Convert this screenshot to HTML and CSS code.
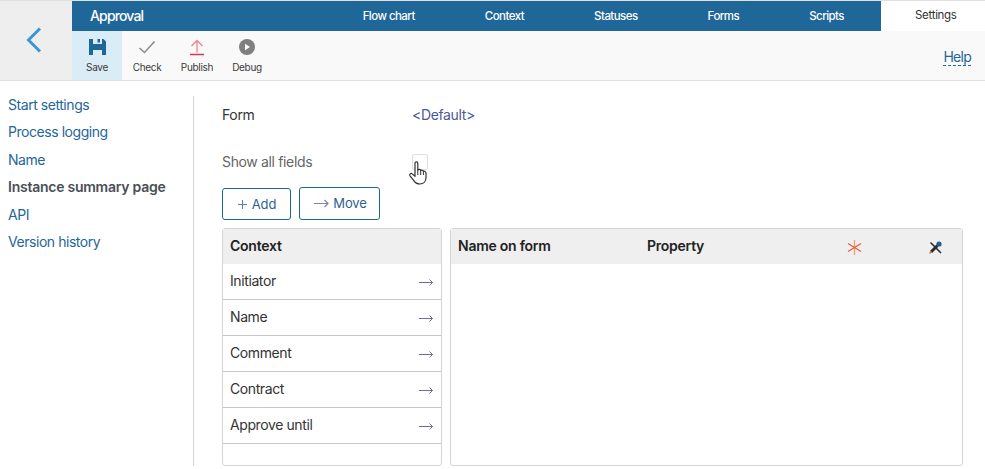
FILE: index.html
```html
<!DOCTYPE html>
<html lang="en">
<head>
<meta charset="utf-8">
<title>Approval</title>
<link rel="stylesheet" href="styles.css">
</head>
<body>
<header class="header">
  <a class="back"><svg width="18" height="28" viewBox="0 0 18 28"><path d="M15 2.500 3.500 14 15 25.500" fill="none" stroke="#3d96d4" stroke-width="3"/></svg></a>
  <div class="header-main">
    <div class="topbar">
      <div class="title">Approval</div>
      <nav class="tabs">
        <a class="tab">Flow chart</a>
        <a class="tab">Context</a>
        <a class="tab">Statuses</a>
        <a class="tab">Forms</a>
        <a class="tab">Scripts</a>
        <a class="tab tab-active">Settings</a>
      </nav>
    </div>
    <div class="toolbar">
      <a class="tool tool-active">
        <svg class="tool-icon" width="18" height="18" viewBox="0 0 18 18"><path fill="#1f6699" d="M1 1h4v5h9V1h1.500L18 3.500V17h-4v-5H5v5H1z"/><path fill="#1f6699" d="M9.500 1H12v3.500H9.500z"/></svg>
        <span>Save</span>
      </a>
      <a class="tool">
        <svg class="tool-icon" width="18" height="18" viewBox="0 0 18 18"><path d="M1.500 10 6.500 14.500 16.500 3.500" fill="none" stroke="#8a8a8a" stroke-width="1.500"/></svg>
        <span>Check</span>
      </a>
      <a class="tool">
        <svg class="tool-icon" width="18" height="18" viewBox="0 0 18 18"><path d="M9 14.500V2.500M3.500 8 9 2.500 14.500 8" fill="none" stroke="#f0828f" stroke-width="1.300"/><path d="M2 16.500h14" stroke="#e0334a" stroke-width="1.500"/></svg>
        <span>Publish</span>
      </a>
      <a class="tool">
        <svg class="tool-icon" width="18" height="18" viewBox="0 0 18 18"><circle cx="9" cy="9" r="8" fill="#808080"/><path d="M7 5.800v6.400L12 9z" fill="#fff"/></svg>
        <span>Debug</span>
      </a>
      <a class="help">Help</a>
    </div>
  </div>
</header>
<div class="page">
  <aside class="sidebar">
    <a class="side-link">Start settings</a>
    <a class="side-link">Process logging</a>
    <a class="side-link">Name</a>
    <a class="side-link side-current">Instance summary page</a>
    <a class="side-link">API</a>
    <a class="side-link">Version history</a>
  </aside>
  <main class="content">
    <div class="field field-form">
      <div class="field-label">Form</div>
      <a class="field-value">&lt;Default&gt;</a>
    </div>
    <div class="field field-show">
      <div class="field-label field-label-muted">Show all fields</div>
      <div class="check-wrap">
        <span class="checkbox"></span>
        <svg class="cursor" width="19" height="25" viewBox="0 0 19 25"><path d="M6 2.300c0-1.900 2.800-1.900 2.800 0V9c.9-.9 2.500-.7 2.900.5 1-.7 2.400-.3 2.700.9 1-.5 2.600 0 2.600 1.700v4.400c0 3.900-2.400 6.500-6 6.500-3.300 0-5-1.300-6.300-3.600L1 14.800c-.9-1.600.8-3 2.200-1.900L6 15.300z" fill="#fff" stroke="#333" stroke-width="1.200" stroke-linejoin="round"/><path d="M8.800 9v5M11.700 9.500V14M14.400 10.400V14" stroke="#333" stroke-width="1" fill="none"/></svg>
      </div>
    </div>
    <div class="actions">
      <button class="btn btn-add"><svg class="btn-icon" width="11" height="11" viewBox="0 0 11 11"><path d="M5.500 1v9M1 5.500h9" stroke="#5f7fa8" stroke-width="1.100" fill="none"/></svg>Add</button>
      <button class="btn btn-move"><svg class="btn-icon" width="15" height="9" viewBox="0 0 15 9"><path d="M0 4.500h14M10.500 1 14 4.500 10.500 8" fill="none" stroke="#7f86a8" stroke-width="1.200"/></svg>Move</button>
    </div>
    <div class="tables">
      <section class="panel panel-context">
        <div class="panel-head">Context</div>
        <div class="row"><span class="row-text">Initiator</span><svg class="row-arrow" width="14" height="9" viewBox="0 0 14 9"><path d="M0 4.500h13.500M10.500 1.500 13.500 4.500 10.500 7.500" fill="none" stroke="#7068a8" stroke-width="1"/></svg></div>
        <div class="row"><span class="row-text">Name</span><svg class="row-arrow" width="14" height="9" viewBox="0 0 14 9"><path d="M0 4.500h13.500M10.500 1.500 13.500 4.500 10.500 7.500" fill="none" stroke="#7068a8" stroke-width="1"/></svg></div>
        <div class="row"><span class="row-text">Comment</span><svg class="row-arrow" width="14" height="9" viewBox="0 0 14 9"><path d="M0 4.500h13.500M10.500 1.500 13.500 4.500 10.500 7.500" fill="none" stroke="#7068a8" stroke-width="1"/></svg></div>
        <div class="row"><span class="row-text">Contract</span><svg class="row-arrow" width="14" height="9" viewBox="0 0 14 9"><path d="M0 4.500h13.500M10.500 1.500 13.500 4.500 10.500 7.500" fill="none" stroke="#7068a8" stroke-width="1"/></svg></div>
        <div class="row"><span class="row-text">Approve until</span><svg class="row-arrow" width="14" height="9" viewBox="0 0 14 9"><path d="M0 4.500h13.500M10.500 1.500 13.500 4.500 10.500 7.500" fill="none" stroke="#7068a8" stroke-width="1"/></svg></div>
      </section>
      <section class="panel panel-form">
        <div class="panel-head panel-head-form">
          <span class="col-name">Name on form</span>
          <span class="col-prop">Property</span>
          <svg class="col-req" width="15" height="15" viewBox="0 0 15 15"><path d="M7.500 0v15" stroke="#f0a070" stroke-width="1.300" fill="none"/><path d="M1 3.500l13 8M14 3.500l-13 8" stroke="#f0553c" stroke-width="1.100" fill="none"/></svg>
          <svg class="col-pin" width="14" height="14" viewBox="0 0 14 14"><path d="M1.500 2.500 12 13" stroke="#2b2b2b" stroke-width="1.600"/><path d="M2 12 8.500 5.500" stroke="#2b2b2b" stroke-width="3"/><circle cx="10" cy="4" r="2.600" fill="#1f5f90"/><path d="M.5 13.500 2.500 11.500" stroke="#c9803a" stroke-width="1.500"/></svg>
        </div>
      </section>
    </div>
  </main>
</div>
</body>
</html>
```
FILE: styles.css
```css
* { box-sizing: border-box; }
html, body { margin: 0; padding: 0; }
body {
  width: 985px;
  height: 469px;
  overflow: hidden;
  background: #fff;
  font-family: Inter, "Liberation Sans", sans-serif;
  font-size: 14px;
  color: #333;
  border-top: 1px solid #e0e0e0;
}
.header { display: flex; height: 80px; border-bottom: 1px solid #e0e0e0; }
.back {
  width: 72px;
  background: #eeeeee;
  display: flex;
  align-items: flex-start;
  justify-content: center;
  padding-top: 25px;
  padding-right: 4px;
}
.header-main { flex: 1; display: flex; flex-direction: column; }
.topbar { display: flex; height: 30px; background: #1f6699; align-items: stretch; }
.title { color: #fff; font-size: 14px; font-weight: 500; line-height: 30px; padding-left: 18px; letter-spacing: -.85px; }
.tabs { margin-left: auto; display: flex; }
.tab { color: #fff; font-size: 11.500px; font-weight: 500; line-height: 30px; padding: 0 35px; letter-spacing: -.55px; }
.tab-active {
  background: #fff;
  color: #333;
  font-weight: 400;
  width: 104px;
  margin-left: 2px;
  padding: 0 0 0 34px;
  line-height: 29px;
  letter-spacing: -.3px;
}
.toolbar { flex: 1; display: flex; background: #f9f9f9; align-items: stretch; }
.tool {
  display: flex;
  flex-direction: column;
  align-items: center;
  font-size: 10px;
  letter-spacing: -.3px;
  padding-top: 7px;
  color: #3a3a3a;
  width: 50px;
}
.tool span { margin-top: 5px; line-height: 12px; }
.tool-active { background: #daedf7; }
.help {
  margin: 17px 14px 0 auto;
  align-self: flex-start;
  font-size: 14px;
  line-height: 17px;
  letter-spacing: -.75px;
  color: #1f6699;
  border-bottom: 1px dashed #1f6699;
}
.page { display: flex; height: 388px; }
.sidebar {
  width: 194px;
  margin-top: 15px;
  height: 370px;
  border-right: 1px solid #d5d5d5;
  padding-left: 8px;
  display: flex;
  flex-direction: column;
  gap: 9.400px;
}
.side-link { color: #1f6699; font-size: 14px; line-height: 18px; letter-spacing: -.45px; }
.side-current { color: #4a4f55; font-weight: 600; letter-spacing: -.25px; }
.content { flex: 1; padding-left: 28px; padding-top: 25px; }
.field { display: flex; align-items: center; height: 18px; }
.field-label { width: 190px; color: #333; font-size: 14px; letter-spacing: -.35px; padding-bottom: 2px; }
.field-label-muted { color: #666; }
.field-value { color: #4a5a9a; font-size: 14px; letter-spacing: -.35px; padding-bottom: 2px; }
.field-show { margin-top: 29px; }
.check-wrap { position: relative; width: 16px; height: 16px; }
.checkbox { display: block; width: 16px; height: 16px; border: 1px solid #ddd; border-radius: 2px; background: #fff; }
.cursor { position: absolute; left: -3px; top: 7px; }
.actions { display: flex; gap: 8px; margin-top: 16px; align-items: flex-end; }
.btn {
  display: flex;
  align-items: center;
  justify-content: center;
  gap: 4px;
  font-family: inherit;
  font-size: 13px;
  letter-spacing: -.1px;
  height: 32px;
  background: #fff;
  border: 1px solid #1f6699;
  border-radius: 3px;
  color: #2f5f8f;
  padding: 0;
}
.btn-add { width: 69px; }
.btn-move { width: 81px; height: 33px; padding: 0 0 1px 2px; gap: 4px; }
.tables { display: flex; gap: 8px; margin-top: 8px; }
.panel { height: 238px; border: 1px solid #d5d5d5; border-radius: 3px; background: #fff; }
.panel-context { width: 220px; }
.panel-form { width: 513px; }
.panel-head {
  height: 35px;
  background: #efefef;
  font-weight: 600;
  color: #222;
  font-size: 14px;
  line-height: 33px;
  padding-left: 7px;
  letter-spacing: -.25px;
}
.panel-head-form { position: relative; display: flex; align-items: center; }
.col-name { width: 189px; padding-bottom: 2px; }
.col-prop { width: 201px; padding-bottom: 2px; }
.col-req { margin-top: 2px; margin-left: -1px; }
.col-pin { margin-left: 67px; margin-top: 1px; }
.row {
  height: 36px;
  border-bottom: 1px solid #c9c9c9;
  display: flex;
  align-items: center;
  justify-content: space-between;
  padding: 0 8px 0 7px;
  font-size: 14px;
  letter-spacing: -.4px;
  color: #333;
}
.row-text { padding-bottom: 2px; }
.row-arrow { margin-top: 2px; }
```
